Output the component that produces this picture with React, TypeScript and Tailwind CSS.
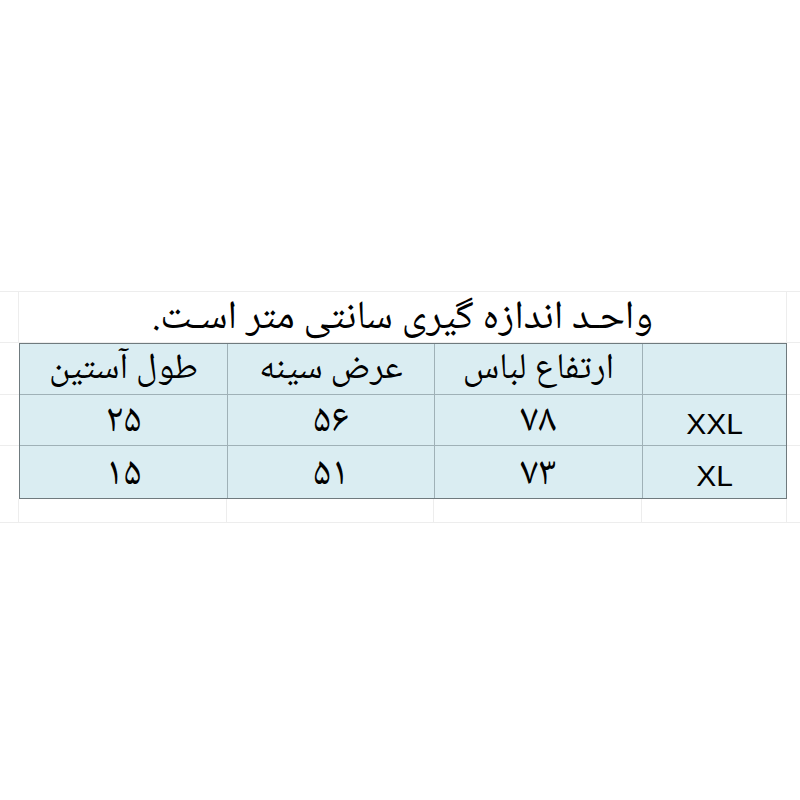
import React from "react";

const FA = { fontFamily: '"Noto Naskh Arabic", "Noto Sans Arabic", "DejaVu Sans", sans-serif' };
const EN = { fontFamily: '"Liberation Sans", Arial, sans-serif' };

const faint = "border-[#ededed]";
const inner = "border-[#9fb1b7]";

const rows = [
  { size: "XXL", height: "۷۸", chest: "۵۶", sleeve: "۲۵", h: "h-[51px]", pb: "pb-0", pbEn: "pb-[4px]" },
  { size: "XL", height: "۷۳", chest: "۵۱", sleeve: "۱۵", h: "h-[52px]", pb: "pb-0", pbEn: "pb-[5px]" },
];

function SideCells() {
  return (
    <div className="flex flex-col">
      <div className={`h-[52px] border-b ${faint}`} />
      <div className={`h-[51px] border-b ${faint}`} />
      <div className="h-[52px]" />
    </div>
  );
}

export default function App() {
  return (
    <div className="min-h-[800px] w-[800px] bg-white pt-[291px]">
      <div className={`border-t ${faint}`}>
        {/* title row */}
        <div className={`flex h-[51px] border-b ${faint}`}>
          <div className={`w-[19px] border-r ${faint}`} />
          <div
            dir="rtl"
            className={`flex w-[768px] items-end justify-center border-r pb-0 text-[40px] leading-[46px] text-black ${faint}`}
            style={FA}
          >
            واحـد اندازه گیری سانتی متر اسـت.
          </div>
          <div className="flex-1" />
        </div>

        {/* table */}
        <div className="flex">
          <div className="w-[19px]">
            <SideCells />
          </div>
          <div className="w-[768px] border border-[#6f7a7e] bg-[#daedf2]">
            <div className={`grid h-[51px] grid-cols-[207px_207px_208px_1fr] border-b ${inner}`}>
              <div dir="rtl" className="flex items-end justify-center pb-[2px] text-[36px] leading-[42px]" style={FA}>
                طول آستین
              </div>
              <div dir="rtl" className={`flex items-end justify-center border-l pb-[2px] text-[36px] leading-[42px] ${inner}`} style={FA}>
                عرض سینه
              </div>
              <div dir="rtl" className={`flex items-end justify-center border-l pb-[2px] text-[36px] leading-[42px] ${inner}`} style={FA}>
                ارتفاع لباس
              </div>
              <div className={`border-l ${inner}`} />
            </div>
            {rows.map((r, i) => (
              <div
                key={r.size}
                className={`grid ${r.h} grid-cols-[207px_207px_208px_1fr] ${i === 0 ? `border-b ${inner}` : ""}`}
              >
                <div className={`flex items-end justify-center ${r.pb} text-[40px] leading-[46px]`} style={FA}>
                  {r.sleeve}
                </div>
                <div className={`flex items-end justify-center border-l ${r.pb} text-[40px] leading-[46px] ${inner}`} style={FA}>
                  {r.chest}
                </div>
                <div className={`flex items-end justify-center border-l ${r.pb} text-[40px] leading-[46px] ${inner}`} style={FA}>
                  {r.height}
                </div>
                <div className={`flex items-end justify-center border-l ${r.pbEn} text-[30px] leading-[34px] ${inner}`} style={EN}>
                  {r.size}
                </div>
              </div>
            ))}
          </div>
          <div className="flex-1">
            <SideCells />
          </div>
        </div>

        {/* empty row below */}
        <div className={`flex h-[24px] border-b ${faint}`}>
          <div className={`w-[19px] border-r ${faint}`} />
          <div className={`w-[208px] border-r ${faint}`} />
          <div className={`w-[207px] border-r ${faint}`} />
          <div className={`w-[208px] border-r ${faint}`} />
          <div className={`w-[145px] border-r ${faint}`} />
          <div className="flex-1" />
        </div>
      </div>
    </div>
  );
}
